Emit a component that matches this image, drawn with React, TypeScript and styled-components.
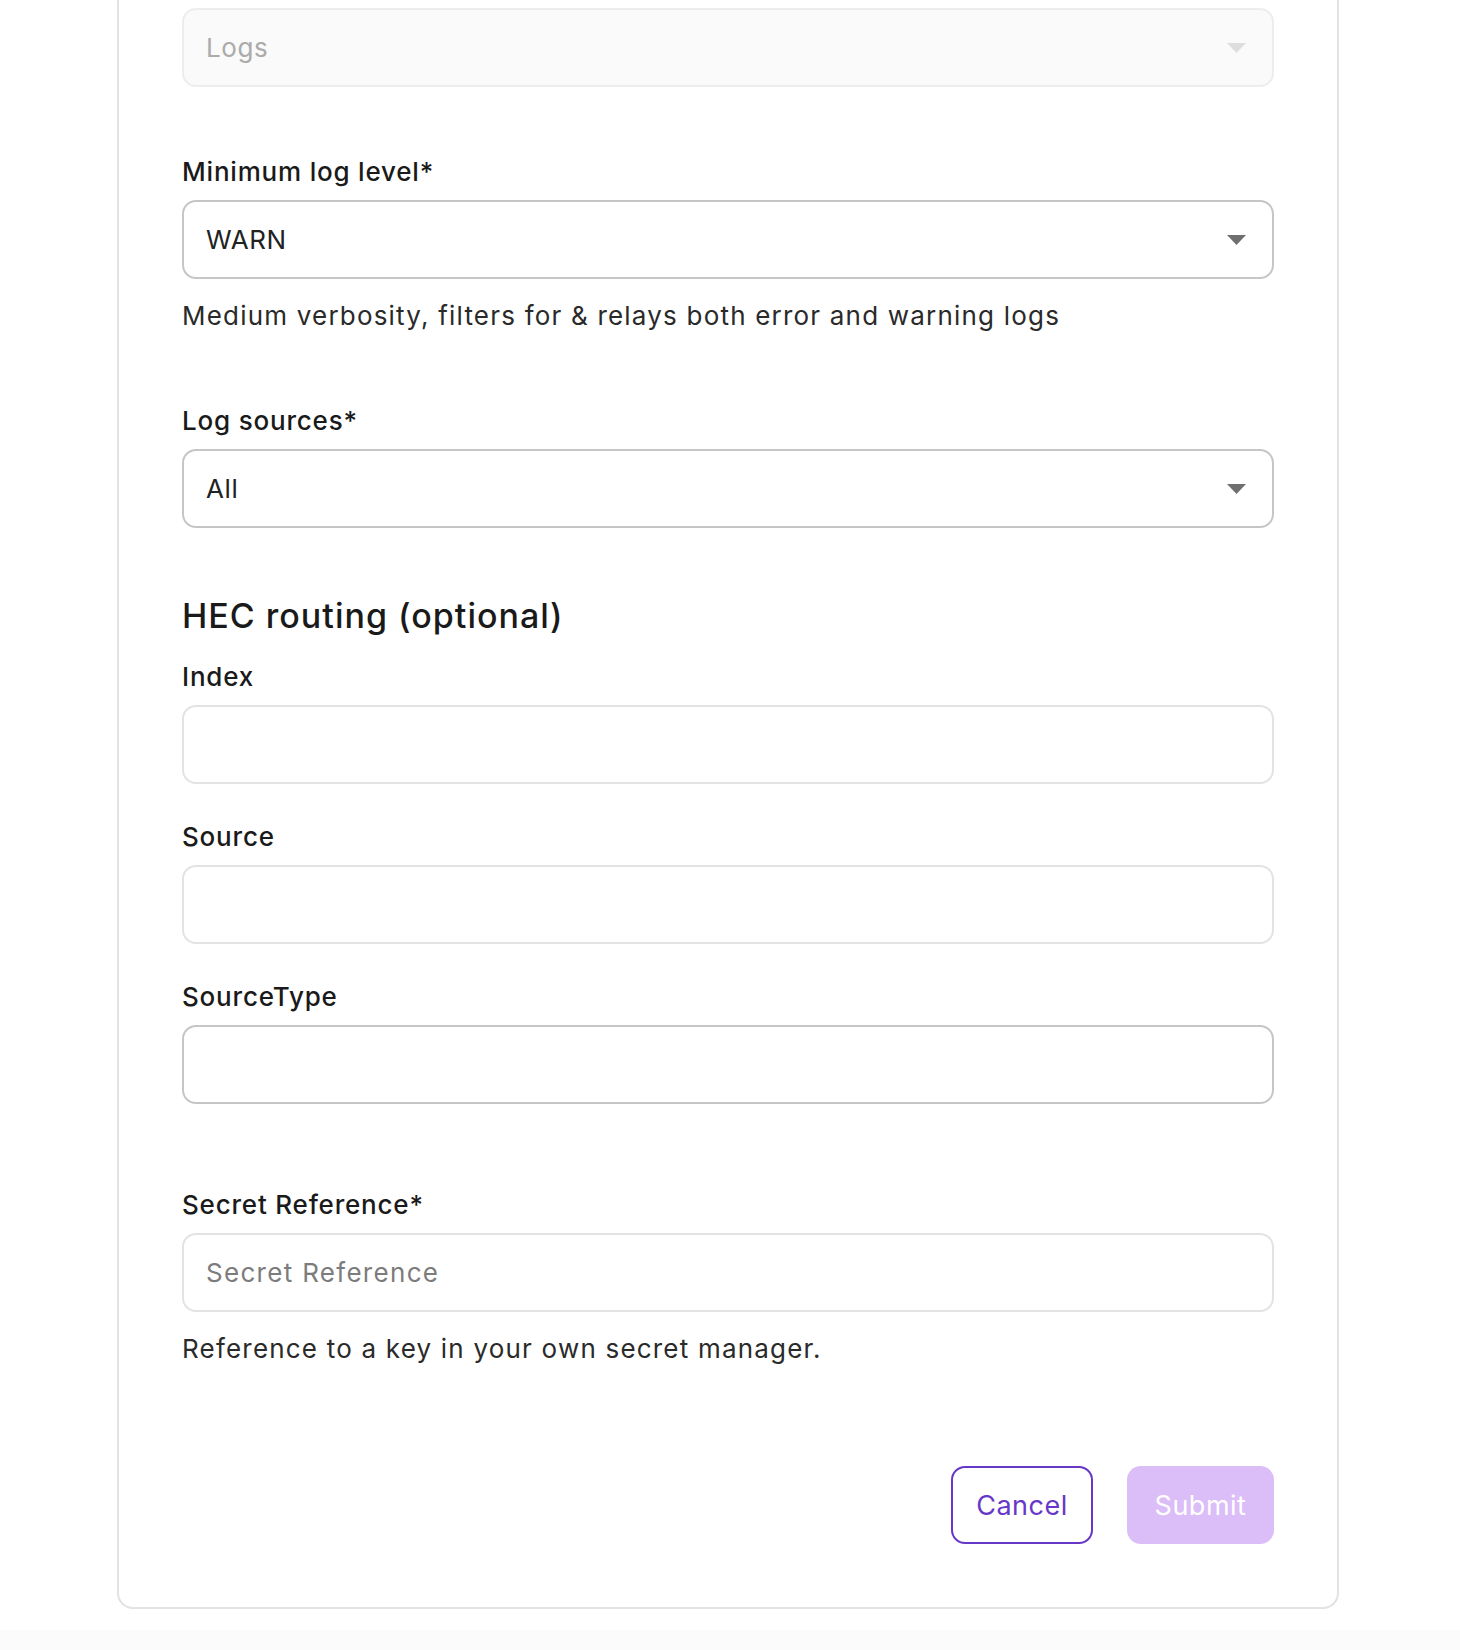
import React from 'react';
import styled, { createGlobalStyle } from 'styled-components';

const GlobalStyle = createGlobalStyle`
  body {
    margin: 0;
    background: #fff;
    font-family: Inter, "Noto Sans", "Liberation Sans", sans-serif;
    color: #1c1c1c;
  }
`;

function Caret({ muted }: { muted?: boolean }) {
  return (
    <CaretIcon width="19" height="10" viewBox="0 0 19 10">
      <path d="M0 0 L19 0 L9.5 10 Z" fill={muted ? '#dedede' : '#6f6f6f'} />
    </CaretIcon>
  );
}

export default function App() {
  return (
    <Page>
      <GlobalStyle />
      <Panel>
        <SelectBox disabled>
          <Value muted>Logs</Value>
          <Caret muted />
        </SelectBox>

        <Field top={69}>
          <Label>Minimum log level*</Label>
          <SelectBox>
            <Value>WARN</Value>
            <Caret />
          </SelectBox>
          <Help>Medium verbosity, filters for &amp; relays both error and warning logs</Help>
        </Field>

        <Field top={73}>
          <Label>Log sources*</Label>
          <SelectBox>
            <Value>All</Value>
            <Caret />
          </SelectBox>
        </Field>

        <Heading>HEC routing (optional)</Heading>

        <Field top={24}>
          <Label>Index</Label>
          <TextInput />
        </Field>
        <Field top={37}>
          <Label>Source</Label>
          <TextInput />
        </Field>
        <Field top={37}>
          <Label>SourceType</Label>
          <TextInput strong />
        </Field>

        <Field top={85}>
          <Label>Secret Reference*</Label>
          <TextInput placeholder="Secret Reference" />
          <Help>Reference to a key in your own secret manager.</Help>
        </Field>

        <Actions>
          <OutlineButton>Cancel</OutlineButton>
          <FilledButton disabled>Submit</FilledButton>
        </Actions>
      </Panel>
      <Footer />
    </Page>
  );
}

const Page = styled.div`
  width: 1460px;
  min-height: 1650px;
  display: flex;
  flex-direction: column;
`;

const Panel = styled.div`
  width: 1222px;
  margin-left: 117px;
  box-sizing: border-box;
  display: flex;
  flex-direction: column;
  padding: 8px 63px 63px;
  border: 2px solid #e2e2e2;
  border-top: none;
  border-radius: 0 0 16px 16px;
  background: #fff;
`;

const Field = styled.div<{ top: number }>`
  display: flex;
  flex-direction: column;
  margin-top: ${p => p.top}px;
`;

const Label = styled.label`
  font-size: 26px;
  line-height: 32px;
  font-weight: 500;
  letter-spacing: 0.8px;
  color: #1a1a1a;
  margin-bottom: 12px;
`;

const SelectBox = styled.div<{ disabled?: boolean }>`
  height: 79px;
  box-sizing: border-box;
  display: flex;
  align-items: center;
  justify-content: space-between;
  padding: 0 26px 0 22px;
  border: 2px solid ${p => (p.disabled ? '#ededed' : '#c6c6c6')};
  border-radius: 14px;
  background: ${p => (p.disabled ? '#fafafa' : '#fff')};
`;

const Value = styled.span<{ muted?: boolean }>`
  font-size: 26px;
  letter-spacing: 0.6px;
  color: ${p => (p.muted ? '#ababab' : '#222')};
`;

const CaretIcon = styled.svg`
  flex: none;
`;

const TextInput = styled.input<{ strong?: boolean }>`
  height: 79px;
  box-sizing: border-box;
  padding: 0 22px;
  border: 2px solid ${p => (p.strong ? '#c6c6c6' : '#e3e3e3')};
  border-radius: 14px;
  background: #fff;
  font-family: inherit;
  font-size: 26px;
  letter-spacing: 1.3px;
  color: #222;
  outline: none;
  &::placeholder {
    color: #7c7c7c;
  }
`;

const Help = styled.p`
  margin: 21px 0 0;
  font-size: 26px;
  line-height: 32px;
  letter-spacing: 1.2px;
  color: #2a2a2a;
`;

const Heading = styled.h2`
  margin: 67px 0 0;
  font-size: 34px;
  line-height: 42px;
  font-weight: 500;
  letter-spacing: 1px;
  color: #1a1a1a;
`;

const Actions = styled.div`
  display: flex;
  justify-content: flex-end;
  gap: 34px;
  margin-top: 101px;
`;

const ButtonBase = styled.button`
  height: 78px;
  box-sizing: border-box;
  padding: 0 23px;
  border-radius: 14px;
  font-family: inherit;
  font-size: 27px;
  font-weight: 400;
  letter-spacing: 0.5px;
`;

const OutlineButton = styled(ButtonBase)`
  min-width: 142px;
  border: 2px solid #6737c8;
  background: #fff;
  color: #6737c8;
`;

const FilledButton = styled(ButtonBase)`
  min-width: 147px;
  border: none;
  background: #dbbdf8;
  color: #fff;
`;

const Footer = styled.div`
  margin-top: 21px;
  height: 20px;
  background: #fbfbfb;
`;
